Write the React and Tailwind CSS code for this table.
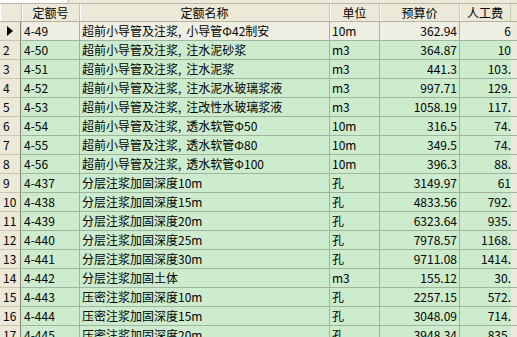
const rows = [
  ['4-49', '超前小导管及注浆,小导管Φ42制安', '10m', '362.94', '6'],
  ['4-50', '超前小导管及注浆,注水泥砂浆', 'm3', '364.87', '10'],
  ['4-51', '超前小导管及注浆,注水泥浆', 'm3', '441.3', '103.'],
  ['4-52', '超前小导管及注浆,注水泥水玻璃浆液', 'm3', '997.71', '129.'],
  ['4-53', '超前小导管及注浆,注改性水玻璃浆液', 'm3', '1058.19', '117.'],
  ['4-54', '超前小导管及注浆,透水软管Φ50', '10m', '316.5', '74.'],
  ['4-55', '超前小导管及注浆,透水软管Φ80', '10m', '349.5', '74.'],
  ['4-56', '超前小导管及注浆,透水软管Φ100', '10m', '396.3', '88.'],
  ['4-437', '分层注浆加固深度10m', '孔', '3149.97', '61'],
  ['4-438', '分层注浆加固深度15m', '孔', '4833.56', '792.'],
  ['4-439', '分层注浆加固深度20m', '孔', '6323.64', '935.'],
  ['4-440', '分层注浆加固深度25m', '孔', '7978.57', '1168.'],
  ['4-441', '分层注浆加固深度30m', '孔', '9711.08', '1414.'],
  ['4-442', '分层注浆加固土体', 'm3', '155.12', '30.'],
  ['4-443', '压密注浆加固深度10m', '孔', '2257.15', '572.'],
  ['4-444', '压密注浆加固深度15m', '孔', '3048.09', '714.'],
  ['4-445', '压密注浆加固深度20m', '孔', '3948.34', '835.'],
]

const font = { fontFamily: '"Noto Sans CJK SC", "Liberation Sans", sans-serif' }

// comma in the grid font sits wide, so pad it a little
function Name({ text }) {
  const i = text.indexOf(',')
  if (i < 0) return text
  return (
    <>
      {text.slice(0, i)}
      <span className="mr-[5px]">,</span>
      {text.slice(i + 1)}
    </>
  )
}

function HeaderCell({ w, children }) {
  return (
    <div className={`${w} h-full flex items-center justify-center border-r border-[#c8c5b4] shadow-[inset_1px_0_0_#ffffff] shrink-0`}>
      {children}
    </div>
  )
}

export default function App() {
  return (
    <div className="w-[517px] h-[337px] overflow-hidden bg-[#eceadb] text-[12px] leading-none text-black" style={font}>
      {/* tab strip */}
      <div className="h-[4px] flex border-b border-[#b9b7a6]">
        <div className="w-[69px] h-full bg-white rounded-br-[4px] border-r border-[#b9b7a6]" />
      </div>

      {/* header */}
      <div className="h-[18px] flex bg-[#ece9d8] border-b border-[#b5b29f]">
        <HeaderCell w="w-[22px]" />
        <HeaderCell w="w-[58px]">定额号</HeaderCell>
        <HeaderCell w="w-[250px]">定额名称</HeaderCell>
        <HeaderCell w="w-[50px]">单位</HeaderCell>
        <HeaderCell w="w-[80px]">预算价</HeaderCell>
        <HeaderCell w="w-[51px]">人工费</HeaderCell>
      </div>

      {/* rows */}
      {rows.map((r, i) => {
        const sel = i === 0
        const bg = sel ? 'bg-[#efeee3]' : 'bg-[#cdeccd]'
        return (
          <div key={i} className="h-[19px] flex">
            <div className="w-[20px] shrink-0 flex items-center pl-[3px] bg-[#ece9d8] border-b border-[#c9c6b5]">
              {sel ? (
                <svg width="6" height="10" viewBox="0 0 6 10" className="ml-[4px]">
                  <path d="M0 0 L6 5 L0 10 Z" fill="#000" />
                </svg>
              ) : (
                <span className="text-[12px]">{i + 1}</span>
              )}
            </div>
            <div className="w-[2px] shrink-0 bg-[#8c8a7c] border-r border-[#d8d6c8]" />
            <div className={`flex flex-1 border-b border-[#9fb59f] ${bg}`}>
              <div className="w-[58px] shrink-0 flex items-center pl-[2px] border-r border-[#9fb59f]">{r[0]}</div>
              <div className="w-[250px] shrink-0 flex items-center pl-[2px] border-r border-[#9fb59f] whitespace-nowrap overflow-hidden">
                <span><Name text={r[1]} /></span>
              </div>
              <div className="w-[50px] shrink-0 flex items-center pl-[2px] border-r border-[#9fb59f]">{r[2]}</div>
              <div className="w-[80px] shrink-0 flex items-center justify-end pr-[2px] border-r border-[#9fb59f]">{r[3]}</div>
              <div className="w-[51px] shrink-0 flex items-center justify-end">{r[4]}</div>
              <div className="flex-1 bg-[#eceadb]" />
            </div>
          </div>
        )
      })}
    </div>
  )
}
